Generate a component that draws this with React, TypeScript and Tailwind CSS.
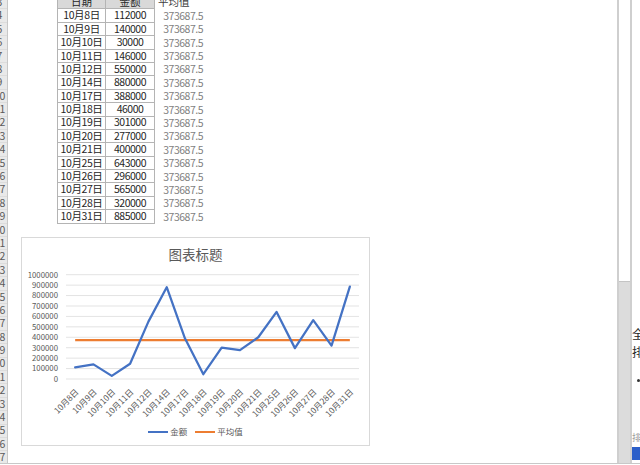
import React from "react";

const dates = ["10月8日","10月9日","10月10日","10月11日","10月12日","10月14日","10月17日","10月18日","10月19日","10月20日","10月21日","10月25日","10月26日","10月27日","10月28日","10月31日"];
const values = [112000,140000,30000,146000,550000,880000,388000,46000,301000,277000,400000,643000,296000,565000,320000,885000];
const AVG = 373687.5;
const FONT = '"Noto Sans CJK SC", "Noto Sans", sans-serif';

function RowHeader() {
  const rows = [];
  for (let r = 3; r <= 37; r++) rows.push(r);
  return (
    <div className="w-[8px] shrink-0 overflow-hidden bg-[#e9e9e9] border-r border-[#c8c8c8]">
      <div className="mt-[-4px] flex flex-col">
        {rows.map((r) => (
          <div key={r} className="h-[13.4px] shrink-0 border-b border-[#dcdcdc] flex items-center">
            <div className="ml-[-8px] w-[16px] text-center text-[10.5px] leading-none text-[#5a5a5a]">{r}</div>
          </div>
        ))}
      </div>
    </div>
  );
}

function Chart() {
  const base = 116;
  const step = 10.43;
  const left = 44;
  const width = 293;
  const bin = width / 16;
  const xs = values.map((_, i) => left + bin * (i + 0.5));
  const yOf = (v: number) => base - (v / 100000) * step;
  const pts = values.map((v, i) => `${xs[i].toFixed(2)},${yOf(v).toFixed(2)}`).join(" ");
  const avgY = yOf(AVG);
  return (
    <div className="ml-[13px] mt-[13.5px] w-[349px] h-[209px] shrink-0 border border-[#d9d9d9] bg-white flex flex-col">
      <div className="pt-[7px] h-[25px] text-center text-[13.5px] leading-[18px] text-[#595959]">图表标题</div>
      <svg width="347" height="160" className="block" style={{ fontFamily: FONT }}>
        {Array.from({ length: 11 }).map((_, i) => (
          <g key={i}>
            <line x1={left} x2={left + width} y1={base - i * step} y2={base - i * step} stroke="#d9d9d9" strokeWidth="0.75" />
            <text x={36} y={base - i * step + 2.8} fontSize="7.8" fill="#595959" textAnchor="end">{i * 100000}</text>
          </g>
        ))}
        <line x1={xs[0]} x2={xs[15]} y1={avgY} y2={avgY} stroke="#ED7D31" strokeWidth="2.25" />
        <polyline points={pts} fill="none" stroke="#4472C4" strokeWidth="2.25" strokeLinejoin="round" strokeLinecap="round" />
        {dates.map((d, i) => (
          <text key={d} x={xs[i] + 4} y={129.7} fontSize="8.3" fill="#595959" textAnchor="end" transform={`rotate(-45 ${xs[i] + 4} 129.7)`}>{d}</text>
        ))}
      </svg>
      <div className="h-[17px] flex items-center justify-center text-[8.5px] text-[#595959]">
        <div className="w-[20px] h-[2px] bg-[#4472C4]" />
        <span className="ml-[2px] leading-none">金额</span>
        <div className="ml-[8px] w-[20px] h-[2px] bg-[#ED7D31]" />
        <span className="ml-[2px] leading-none">平均值</span>
      </div>
    </div>
  );
}

function Sheet() {
  const cell = "border-r border-b border-[#b4b4b4] flex items-center justify-center";
  return (
    <div className="flex-1 min-w-0 overflow-hidden bg-white">
      <div className="mt-[-4px] flex flex-col">
        <div className="ml-[49px] flex flex-col text-[10.5px] leading-none">
          <div className="flex h-[13.4px] shrink-0">
            <div className={`w-[49px] border-l bg-[#d9d9d9] text-[#262626] ${cell}`}>日期</div>
            <div className={`w-[49px] bg-[#d9d9d9] text-[#262626] ${cell}`}>金额</div>
            <div className="w-[50px] pl-[3px] flex items-center text-[#404040]">平均值</div>
          </div>
          {dates.map((d, i) => (
            <div key={d} className="flex h-[13.4px] shrink-0">
              <div className={`w-[49px] border-l text-[#262626] tracking-[-0.4px] ${cell}`}>{d}</div>
              <div className={`w-[49px] text-[#262626] tracking-[-0.5px] ${cell}`}>{values[i]}</div>
              <div className="w-[50px] pr-[2px] flex items-center justify-end text-[#7f7f7f] tracking-[-0.5px]">373687.5</div>
            </div>
          ))}
        </div>
        <Chart />
      </div>
    </div>
  );
}

function Scrollbar() {
  return (
    <div className="w-[15px] shrink-0 bg-[#dcdcdc] border-x-2 border-[#cfcfcf] flex flex-col">
      <div className="h-[282px] bg-white border-b border-[#c4c4c4]" />
    </div>
  );
}

function RightPanel() {
  return (
    <div className="w-[8px] shrink-0 overflow-hidden bg-white flex flex-col text-[12px] leading-[14px] text-[#262626]">
      <div className="mt-[327px] whitespace-nowrap">全</div>
      <div className="mt-[4px] whitespace-nowrap">排</div>
      <div className="mt-[20px] ml-[5px] w-[3px] h-[3px] rounded-full bg-[#333]" />
      <div className="mt-[50px] text-[9px] leading-[11px] text-[#9a9a9a] whitespace-nowrap">排</div>
      <div className="mt-[4px] h-[13px] bg-[#2c5fc9]" />
    </div>
  );
}

export default function App() {
  return (
    <div className="w-[640px] h-[465px] overflow-hidden bg-white flex flex-col" style={{ fontFamily: FONT }}>
      <div className="flex h-[463px]">
        <RowHeader />
        <Sheet />
        <Scrollbar />
        <RightPanel />
      </div>
      <div className="h-[2px] border-t border-[#c8c8c8] bg-white" />
    </div>
  );
}
